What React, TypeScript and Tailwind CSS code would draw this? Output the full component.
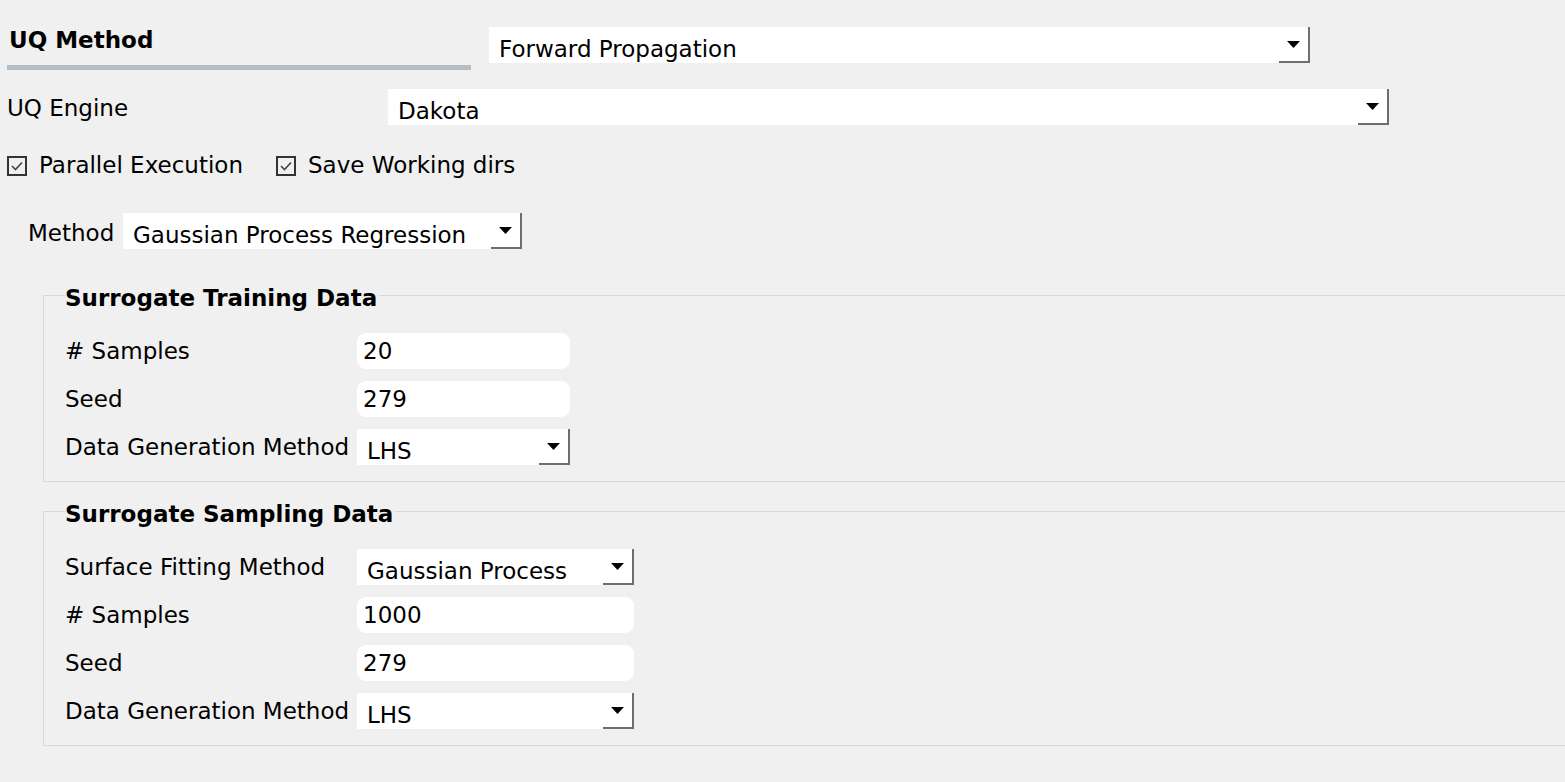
import React from "react";

const font = { fontFamily: '"DejaVu Sans", Verdana, sans-serif' };

function Arrow() {
  return (
    <svg width="13" height="7" viewBox="0 0 13 7">
      <path d="M0 0 H13 L6.5 7 Z" fill="#000" />
    </svg>
  );
}

function Combo({ value, className }: { value: string; className: string }) {
  return (
    <div className={`flex h-[36px] bg-white ${className}`}>
      <div className="flex-1 overflow-hidden pl-[10px] pt-[6px] leading-[32px] whitespace-nowrap">{value}</div>
      <div className="flex w-[31px] items-center justify-center border-r-2 border-b-2 border-[#6e6e6e]">
        <Arrow />
      </div>
    </div>
  );
}

function Field({ value, className }: { value: string; className: string }) {
  return (
    <div className={`flex h-[36px] items-center rounded-[9px] bg-white pl-[6px] ${className}`}>{value}</div>
  );
}

function Check({ label }: { label: string }) {
  return (
    <label className="flex items-center gap-[12px]">
      <span className="flex h-[20px] w-[20px] items-center justify-center border-2 border-[#333]">
        <svg width="14" height="12" viewBox="0 0 14 12">
          <path d="M2 6 L5.5 9.5 L12 2.5" fill="none" stroke="#444" strokeWidth="1.6" />
        </svg>
      </span>
      <span>{label}</span>
    </label>
  );
}

function Group({ title, children }: { title: string; children: React.ReactNode }) {
  return (
    <div className="relative ml-[43px] border-t border-b border-l border-[#d9d9d9] pl-[21px] pt-[31px]">
      <div className="absolute left-[21px] top-[-14px] bg-[#f0f0f0] pr-[2px] font-bold leading-[32px]">{title}</div>
      {children}
    </div>
  );
}

function Row({ label, children }: { label: string; children: React.ReactNode }) {
  return (
    <div className="flex h-[48px] items-center">
      <div className="w-[292px] shrink-0 whitespace-nowrap">{label}</div>
      {children}
    </div>
  );
}

export default function App() {
  return (
    <div className="h-[782px] w-[1565px] overflow-hidden bg-[#f0f0f0] text-[23px] text-black" style={font}>
      {/* header */}
      <div className="flex pt-[27px]">
        <div className="ml-[7px] w-[464px]">
          <div className="pl-[2px] text-[23px] font-bold leading-[26px]">UQ Method</div>
          <div className="mt-[12px] h-[5px] bg-[#b2bec4]" />
        </div>
        <Combo value="Forward Propagation" className="ml-[18px] w-[821px]" />
      </div>

      <div className="mt-[19px] flex items-center">
        <div className="ml-[7px] w-[381px] pt-[2px]">UQ Engine</div>
        <Combo value="Dakota" className="w-[1001px]" />
      </div>

      <div className="ml-[7px] mt-[22px] flex h-[36px] items-center gap-[33px]">
        <Check label="Parallel Execution" />
        <Check label="Save Working dirs" />
      </div>

      <div className="ml-[28px] mt-[29px] flex items-center">
        <div className="w-[95px] pt-[3px]">Method</div>
        <Combo value="Gaussian Process Regression" className="w-[399px]" />
      </div>

      <div className="mt-[45px]">
        <Group title="Surrogate Training Data">
          <Row label="# Samples"><Field value="20" className="w-[213px]" /></Row>
          <Row label="Seed"><Field value="279" className="w-[213px]" /></Row>
          <Row label="Data Generation Method"><Combo value="LHS" className="w-[213px]" /></Row>
          <div className="h-[10px]" />
        </Group>
      </div>

      <div className="mt-[29px]">
        <Group title="Surrogate Sampling Data">
          <Row label="Surface Fitting Method"><Combo value="Gaussian Process" className="w-[277px]" /></Row>
          <Row label="# Samples"><Field value="1000" className="w-[277px]" /></Row>
          <Row label="Seed"><Field value="279" className="w-[277px]" /></Row>
          <Row label="Data Generation Method"><Combo value="LHS" className="w-[277px]" /></Row>
          <div className="h-[10px]" />
        </Group>
      </div>
    </div>
  );
}
